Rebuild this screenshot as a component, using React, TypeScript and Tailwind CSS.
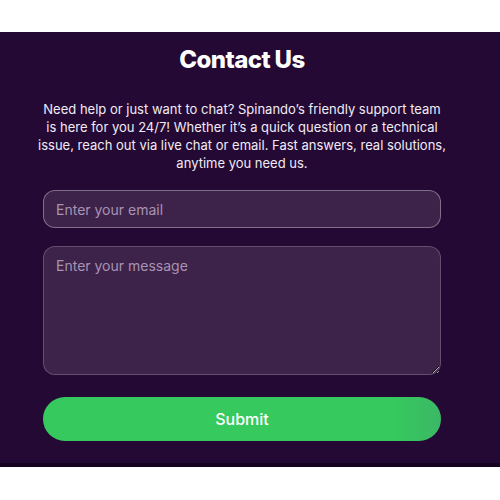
export default function App() {
  return (
    <div className="bg-white pt-8 pb-[32px] font-['Inter',sans-serif]">
      <section className="bg-[#240934] border-b-[4px] border-[#15041f] pl-[43px] pr-[59px] pt-[14px] pb-[22px]">
        <h1 className="text-center text-[24px] leading-[28px] font-extrabold tracking-tight text-white">Contact Us</h1>
        <p className="-mx-[8px] mt-[26px] text-center text-[13px] leading-[18px] text-[#f1ebf4]">
          Need help or just want to chat? Spinando’s friendly support team
          <br />
          is here for you 24/7! Whether it’s a quick question or a technical
          <br />
          issue, reach out via live chat or email. Fast answers, real solutions,
          <br />
          anytime you need us.
        </p>

        <form className="mt-[18px] flex flex-col" onSubmit={(e) => e.preventDefault()}>
          <input
            type="email"
            autoFocus
            placeholder="Enter your email"
            className="h-[38px] w-full rounded-[12px] border border-white/35 bg-[#3d2249] px-[12px] text-[14px] text-white caret-white placeholder:text-[#a893b3] outline-none"
          />
          <textarea
            placeholder="Enter your message"
            className="mt-[18px] h-[129px] w-full rounded-[12px] border border-white/20 bg-[#3d2249] px-[12px] py-[8px] text-[14px] text-white placeholder:text-[#a893b3] outline-none"
          />
          <button
            type="submit"
            className="mt-[22px] h-[44px] w-full rounded-full bg-[linear-gradient(90deg,#36c95d_0%,#36c95d_88%,#3bb866_100%)] text-[16px] font-medium text-white"
          >
            Submit
          </button>
        </form>
      </section>
    </div>
  );
}
